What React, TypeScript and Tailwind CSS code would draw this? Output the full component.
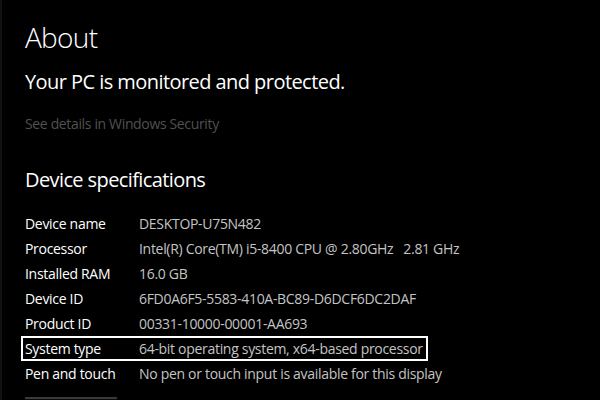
import React from "react";

const rows: [string, string][] = [
  ["Device name", "DESKTOP-U75N482"],
  ["Processor", "Intel(R) Core(TM) i5-8400 CPU @ 2.80GHz   2.81 GHz"],
  ["Installed RAM", "16.0 GB"],
  ["Device ID", "6FD0A6F5-5583-410A-BC89-D6DCF6DC2DAF"],
  ["Product ID", "00331-10000-00001-AA693"],
  ["System type", "64-bit operating system, x64-based processor"],
  ["Pen and touch", "No pen or touch input is available for this display"],
];

export default function App() {
  return (
    <div
      className="w-[600px] h-[400px] overflow-hidden bg-black border-l-2 border-[#111111] pl-[23px] text-white"
      style={{ fontFamily: '"Segoe UI", "Open Sans", "Noto Sans", sans-serif' }}
    >
      <div className="pt-[19px] text-[28px] leading-[36px] font-light tracking-[-0.025em]">About</div>
      <div className="mt-[13px] text-[20px] leading-[28px] tracking-[-0.028em]">Your PC is monitored and protected.</div>
      <div className="mt-[18px] text-[14px] leading-[20px] text-[#505050] tracking-[-0.025em]">See details in Windows Security</div>
      <div className="mt-[32px] text-[20px] leading-[28px] tracking-[-0.03em]">Device specifications</div>
      <div className="mt-[17px] flex flex-col tracking-[-0.019em]">
        {rows.map(([k, v]) => {
          const hl = k === "System type";
          return (
            <div
              key={k}
              className={
                hl
                  ? "flex h-[25px] w-fit -ml-[4px] pl-[2px] pr-[3px] border-2 border-white text-[14px] leading-[21px] whitespace-pre"
                  : "flex h-[25px] text-[14px] leading-[25px] whitespace-pre"
              }
            >
              <div className="w-[114px] shrink-0 text-white">{k}</div>
              <div className="text-[#c4c4c4]">{v}</div>
            </div>
          );
        })}
      </div>
      <div className="mt-[11px] w-[92px] h-[30px] border-t-2 border-[#3a3a3a] bg-[#0a0a0a]" />
    </div>
  );
}
